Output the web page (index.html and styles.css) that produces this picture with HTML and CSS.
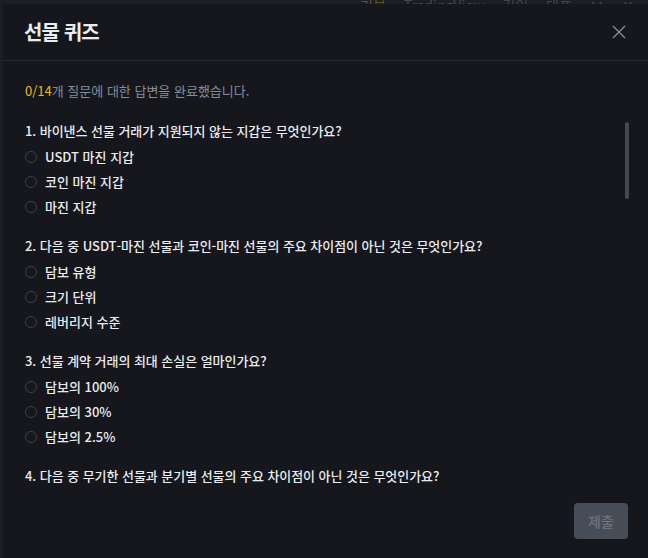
FILE: index.html
```html
<!DOCTYPE html>
<html lang="ko">
<head>
<meta charset="utf-8">
<title>선물 퀴즈</title>
<link rel="stylesheet" href="styles.css">
</head>
<body>
<div class="page">
  <div class="page-bar">
    <span class="tab tab-active">기본</span>
    <span class="tab">TradingView</span>
    <span class="tab">깊이</span>
    <span class="tab">대표</span>
    <span class="tab">∷</span>
    <span class="tab">✕</span>
    <span class="tab">오픈</span>
  </div>
</div>
<div class="modal">
  <div class="modal-header">
    <h1 class="modal-title">선물 퀴즈</h1>
    <button class="close-btn" aria-label="닫기">
      <svg width="14" height="14" viewBox="0 0 14 14"><path d="M1 1L13 13M13 1L1 13" stroke="#848e9c" stroke-width="1.4" fill="none"/></svg>
    </button>
  </div>
  <div class="modal-body">
    <p class="progress"><span class="progress-count">0/14</span>개 질문에 대한 답변을 완료했습니다.</p>
    <div class="quiz-list">
      <div class="question">
        <div class="q-title">1. 바이낸스 선물 거래가 지원되지 않는 지갑은 무엇인가요?</div>
        <label class="option"><span class="radio"></span><span class="opt-text">USDT 마진 지갑</span></label>
        <label class="option"><span class="radio"></span><span class="opt-text">코인 마진 지갑</span></label>
        <label class="option"><span class="radio"></span><span class="opt-text">마진 지갑</span></label>
      </div>
      <div class="question">
        <div class="q-title">2. 다음 중 USDT-마진 선물과 코인-마진 선물의 주요 차이점이 아닌 것은 무엇인가요?</div>
        <label class="option"><span class="radio"></span><span class="opt-text">담보 유형</span></label>
        <label class="option"><span class="radio"></span><span class="opt-text">크기 단위</span></label>
        <label class="option"><span class="radio"></span><span class="opt-text">레버리지 수준</span></label>
      </div>
      <div class="question">
        <div class="q-title">3. 선물 계약 거래의 최대 손실은 얼마인가요?</div>
        <label class="option"><span class="radio"></span><span class="opt-text">담보의 100%</span></label>
        <label class="option"><span class="radio"></span><span class="opt-text">담보의 30%</span></label>
        <label class="option"><span class="radio"></span><span class="opt-text">담보의 2.5%</span></label>
      </div>
      <div class="question">
        <div class="q-title">4. 다음 중 무기한 선물과 분기별 선물의 주요 차이점이 아닌 것은 무엇인가요?</div>
        <label class="option"><span class="radio"></span><span class="opt-text">만기일</span></label>
        <label class="option"><span class="radio"></span><span class="opt-text">펀딩 비율</span></label>
        <label class="option"><span class="radio"></span><span class="opt-text">담보 유형</span></label>
      </div>
      <div class="scroll-thumb"></div>
    </div>
  </div>
  <div class="modal-footer">
    <button class="submit-btn">제출</button>
  </div>
</div>
</body>
</html>
```

FILE: styles.css
```css
* { box-sizing: border-box; }
html, body {
  margin: 0;
  padding: 0;
  width: 648px;
  height: 558px;
  overflow: hidden;
  background: #1c1e23;
  font-family: "Noto Sans CJK KR", "Noto Sans", sans-serif;
}
.page-bar {
  height: 8px;
  display: flex;
  align-items: flex-end;
  gap: 18px;
  padding-left: 360px;
  overflow: hidden;
}
.tab {
  font-size: 14px;
  line-height: 14px;
  color: #43474e;
  white-space: nowrap;
  transform: translateY(4px);
}
.tab-active { color: #62501e; }

.modal {
  position: fixed;
  top: 4px;
  left: 3px;
  width: 645px;
  height: 554px;
  background: #15171c;
  display: flex;
  flex-direction: column;
  color: #eaecef;
}
.modal-header {
  height: 57px;
  border-bottom: 1px solid #262a31;
  display: flex;
  align-items: center;
  justify-content: space-between;
  padding: 0 22px 0 21px;
  flex: none;
}
.modal-title {
  margin: 0;
  font-size: 20px;
  font-weight: 700;
  letter-spacing: -0.9px;
  line-height: 28px;
  color: #eaecef;
}
.close-btn {
  border: 0;
  background: none;
  padding: 0;
  width: 14px;
  height: 14px;
  display: flex;
}
.modal-body {
  flex: 1;
  padding: 21px 0 0 22px;
  display: flex;
  flex-direction: column;
  min-height: 0;
}
.progress {
  margin: 0;
  font-size: 13px;
  line-height: 18px;
  color: #848e9c;
  letter-spacing: 0;
}
.progress-count { color: #f0b90b; }
.quiz-list {
  position: relative;
  height: 389px;
  overflow: hidden;
  padding-top: 21px;
}
.question { margin-bottom: 17px; }
.q-title {
  font-size: 13px;
  line-height: 20px;
  font-weight: 500;
  letter-spacing: -0.05px;
  color: #eaecef;
  margin-bottom: 3px;
  white-space: nowrap;
}
.option {
  display: flex;
  align-items: center;
  height: 25px;
  gap: 8px;
}
.radio {
  width: 12px;
  height: 12px;
  border-radius: 50%;
  border: 1px solid #3c4149;
  flex: none;
}
.opt-text {
  font-size: 13px;
  font-weight: 500;
  letter-spacing: 0;
  color: #eaecef;
}
.scroll-thumb {
  position: absolute;
  top: 22px;
  right: 19px;
  width: 4px;
  height: 77px;
  border-radius: 2px;
  background: #434851;
}
.modal-footer {
  flex: none;
  display: flex;
  justify-content: flex-end;
  padding: 14px 20px 19px 0;
}
.submit-btn {
  width: 54px;
  height: 36px;
  border: 0;
  border-radius: 4px;
  background: #474d57;
  color: #6d737d;
  font-family: "Noto Sans CJK KR", sans-serif;
  font-size: 14px;
  font-weight: 500;
  padding: 0;
}
```
